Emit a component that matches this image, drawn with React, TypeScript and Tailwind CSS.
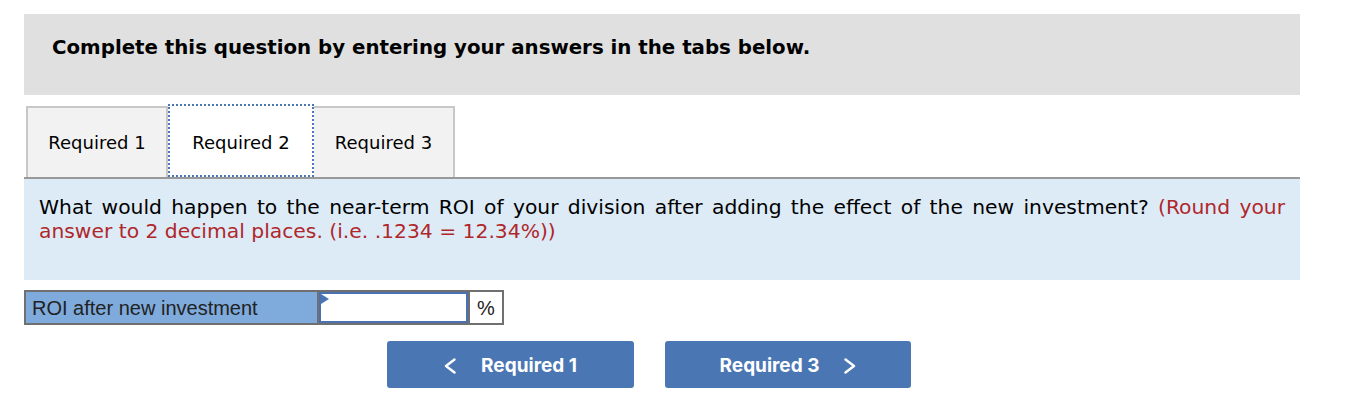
const verdana = "font-['Verdana','DejaVu_Sans',sans-serif]";

function Chevron({ dir }: { dir: "left" | "right" }) {
  return (
    <svg width="12" height="16" viewBox="0 0 12 16" fill="none" stroke="currentColor" strokeWidth="2.4" strokeLinecap="round" strokeLinejoin="round">
      {dir === "left" ? <polyline points="10.5,1.5 2,8 10.5,14.5" /> : <polyline points="1.5,1.5 10,8 1.5,14.5" />}
    </svg>
  );
}

export default function App() {
  return (
    <div className="w-[1346px] bg-white pl-6 pr-[46px] pt-[14px] pb-6">
      <div className={`h-[81px] bg-[#e0e0e0] pl-7 pt-[22px] text-[19.8px] font-bold leading-6 text-black ${verdana}`}>
        Complete this question by entering your answers in the tabs below.
      </div>

      <div className={`mt-[11px] flex border-b-2 border-[#999999] pl-[2px] text-[18px] text-black ${verdana}`}>
        <button className="h-[71px] w-[142px] border-2 border-b-0 border-[#c8c8c8] bg-[#f2f2f2] text-center">
          Required 1
        </button>
        <button className="-mt-[2px] -mb-[2px] h-[73px] w-[146px] border-2 border-dotted border-[#4a77b4] bg-white pt-[4px] text-center outline-none">
          Required 2
        </button>
        <button className="h-[71px] w-[141px] border-2 border-b-0 border-l-0 border-[#c8c8c8] bg-[#f2f2f2] text-center">
          Required 3
        </button>
      </div>

      <div className={`h-[101px] bg-[#ddebf7] px-[15px] pt-[16px] text-justify text-[20.3px] leading-6 text-black ${verdana}`}>
        What would happen to the near-term ROI of your division after adding the effect of the new investment?{" "}
        <span className="text-[#b0272b]">
          (Round your answer to 2 decimal places. (i.e. .1234 = 12.34%))
        </span>
      </div>

      <div className="mt-[10px] flex h-[35px] font-['Liberation_Sans',Arial,sans-serif] text-[20px] text-[#222]">
        <div className="flex w-[295px] items-center border-2 border-[#707070] bg-[#7eaadc] pl-[6px] pt-[1px]">
          ROI after new investment
        </div>
        <div className="relative w-[149px] border-y-2 border-[#707070] bg-white">
          <div className="h-full border-2 border-[#4a72b0] bg-white" />
          <div className="absolute left-[2px] top-[2px] h-0 w-0 border-y-[5px] border-l-[8px] border-y-transparent border-l-[#4a77b4]" />
        </div>
        <div className="flex w-[36px] items-center justify-center border-2 border-[#707070] bg-white">
          %
        </div>
      </div>

      <div className="mt-4 flex gap-[31px] pl-[363px] font-['Inter',sans-serif] text-[19px] font-bold text-white">
        <button className="flex h-[47px] w-[247px] items-center justify-center gap-[25px] rounded-[3px] bg-[#4a77b4] pt-[3px]">
          <Chevron dir="left" />
          <span>Required 1</span>
        </button>
        <button className="flex h-[47px] w-[246px] items-center justify-center gap-[25px] rounded-[3px] bg-[#4a77b4] pt-[3px]">
          <span>Required 3</span>
          <Chevron dir="right" />
        </button>
      </div>
    </div>
  );
}
